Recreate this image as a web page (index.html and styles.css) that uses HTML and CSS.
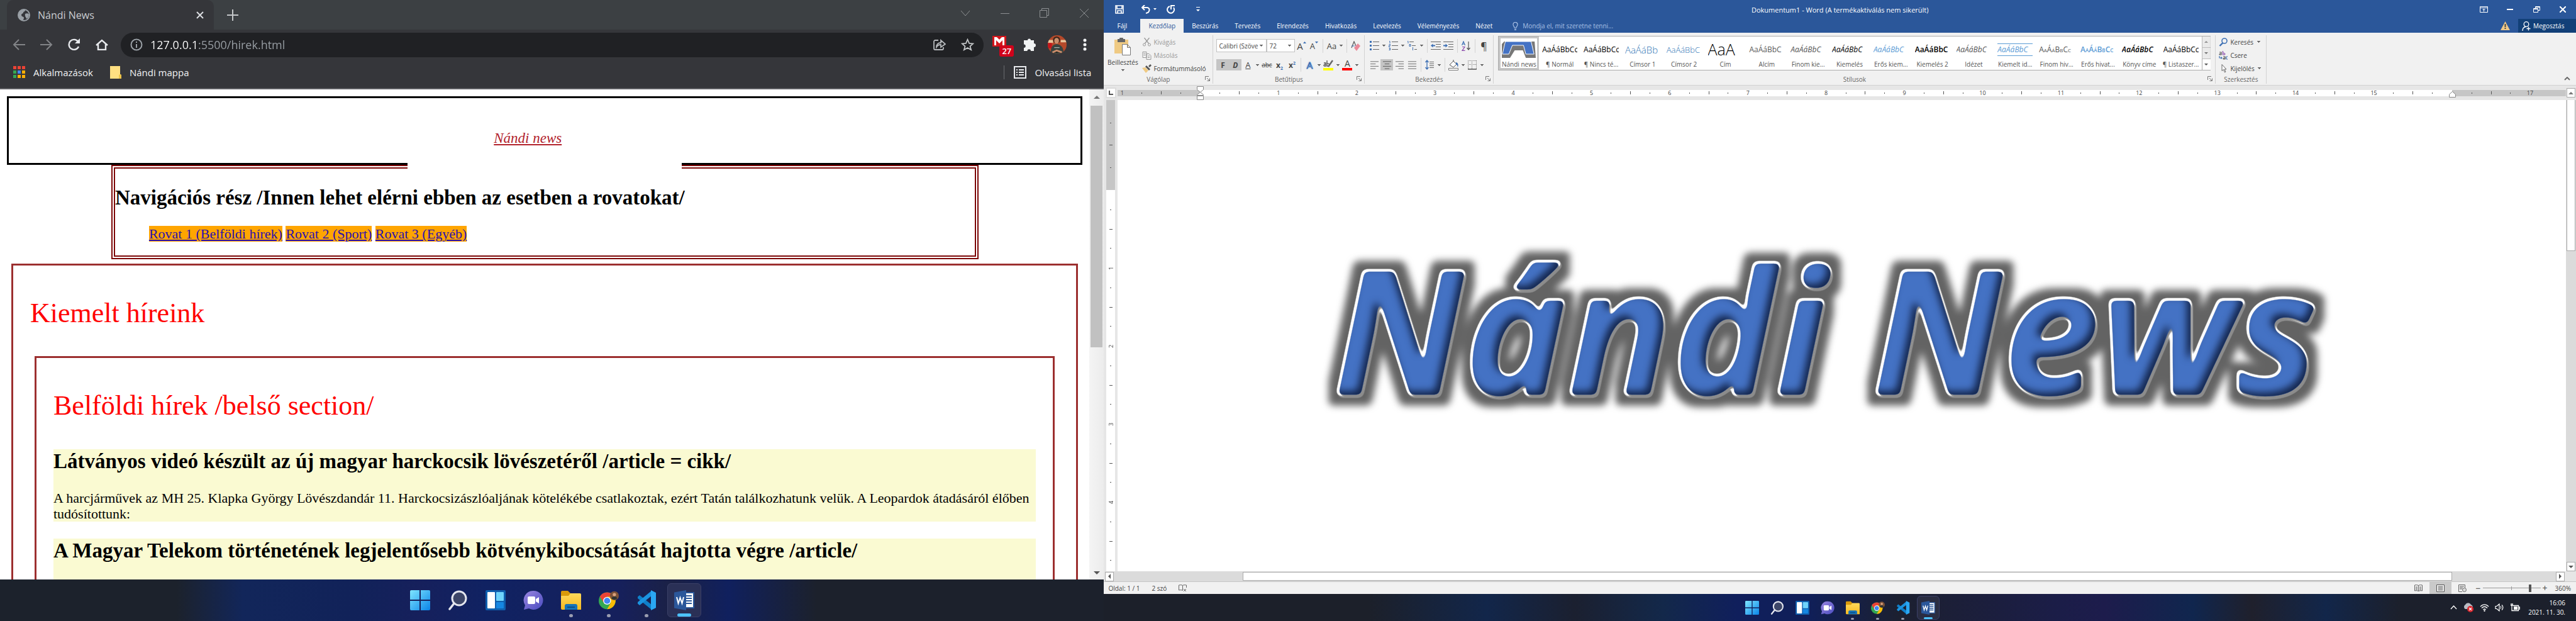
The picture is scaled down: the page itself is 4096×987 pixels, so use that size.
FILE: index.html
```html
<!DOCTYPE html>
<html lang="hu">
<head>
<meta charset="utf-8">
<title>Nándi News</title>
<link rel="stylesheet" href="styles.css">
</head>
<body>
<svg class="defs" width="0" height="0" aria-hidden="true">
  <defs>
    <linearGradient id="gWin" x1="0" y1="0" x2="1" y2="1"><stop offset="0" stop-color="#7fe6ff"/><stop offset="1" stop-color="#0a84e8"/></linearGradient>
    <linearGradient id="gChat" x1="0" y1="0" x2="1" y2="1"><stop offset="0" stop-color="#9a86e0"/><stop offset="1" stop-color="#4a4cc0"/></linearGradient>
    <linearGradient id="gFold" x1="0" y1="0" x2="0" y2="1"><stop offset="0" stop-color="#ffd95a"/><stop offset="1" stop-color="#f5b921"/></linearGradient>
    <filter id="wordart" x="-5%" y="-15%" width="110%" height="130%" color-interpolation-filters="sRGB">
      <feGaussianBlur in="SourceAlpha" stdDeviation="4" result="soft"/>
      <feComponentTransfer in="soft" result="body"><feFuncA type="linear" slope="9" intercept="-4.6"/></feComponentTransfer>
      <feComponentTransfer in="soft" result="rim"><feFuncA type="linear" slope="9" intercept="-2"/></feComponentTransfer>
      <feMorphology in="rim" operator="dilate" radius="14" result="wide"/>
      <feGaussianBlur in="wide" stdDeviation="6" result="wideSoft"/>
      <feFlood flood-color="#636363"/><feComposite in2="wideSoft" operator="in" result="glow"/>
      <feOffset in="rim" dx="1" dy="2" result="rimLow"/>
      <feFlood flood-color="#8c8c8c"/><feComposite in2="rimLow" operator="in" result="rimDark"/>
      <feOffset in="rim" dx="-1" dy="-1" result="rimHigh"/>
      <feFlood flood-color="#ffffff"/><feComposite in2="rimHigh" operator="in" result="rimWhite"/>
      <feOffset in="body" dx="2" dy="3" result="bodyLow"/>
      <feFlood flood-color="#8c8c8c"/><feComposite in2="bodyLow" operator="in" result="low"/>
      <feFlood flood-color="#4472c4"/><feComposite in2="body" operator="in" result="blue"/>
      <feFlood flood-color="#14264d"/><feComposite in2="body" operator="out" result="outside"/>
      <feGaussianBlur in="outside" stdDeviation="6" result="outSoft"/>
      <feOffset in="outSoft" dx="-6" dy="-6" result="outMoved"/>
      <feComposite in="outMoved" in2="body" operator="in" result="shade"/>
      <feMerge><feMergeNode in="glow"/><feMergeNode in="rimDark"/><feMergeNode in="rimWhite"/><feMergeNode in="low"/><feMergeNode in="blue"/><feMergeNode in="shade"/></feMerge>
    </filter>
    <symbol id="i-start" viewBox="0 0 32 32"><path fill="url(#gWin)" d="M0 2a2 2 0 0 1 2-2h13v15H0zM17 0h13a2 2 0 0 1 2 2v13H17zM0 17h15v15H2a2 2 0 0 1-2-2zM17 17h15v13a2 2 0 0 1-2 2H17z"/></symbol>
    <symbol id="i-search" viewBox="0 0 32 32"><circle cx="18" cy="13" r="11" fill="#3d4668" stroke="#e4e6ee" stroke-width="3"/><path d="M10 21 3 30" stroke="#e4e6ee" stroke-width="3.5" stroke-linecap="round"/></symbol>
    <symbol id="i-widgets" viewBox="0 0 32 32"><rect width="32" height="32" y="0" rx="2" fill="#0f5fae"/><rect x="3" y="3" width="12" height="26" rx="1" fill="#fff"/><rect x="17" y="3" width="12" height="14" rx="1" fill="#6fd4fb"/><rect x="17" y="19" width="12" height="10" rx="1" fill="#1587e2"/></symbol>
    <symbol id="i-chat" viewBox="0 0 32 32"><path fill="url(#gChat)" d="M16 1a15 15 0 1 1-7 28l-8 2 2-7A15 15 0 0 1 16 1z"/><rect x="7" y="10" width="12" height="12" rx="2" fill="#fff"/><path fill="#fff" d="m20 14 5-3v10l-5-3z"/></symbol>
    <symbol id="i-folder" viewBox="0 0 32 32"><path fill="#d99a0b" d="M0 3a2 2 0 0 1 2-2h9l4 4v6H0z"/><path fill="url(#gFold)" d="M0 9h12l3-4h15a2 2 0 0 1 2 2v24H2a2 2 0 0 1-2-2z"/><path fill="#1673b9" d="M6 31v-6a3 3 0 0 1 3-3h14a3 3 0 0 1 3 3v6z"/><path d="M10 27h12" stroke="#0b4f86" stroke-width="2"/></symbol>
    <symbol id="i-chrome" viewBox="0 0 36 34"><circle cx="15" cy="18" r="15" fill="#34a853"/><path fill="#ea4335" d="M2 10.500A15 15 0 0 1 28 10.500H15L9 21.500z"/><path fill="#fbbc05" d="M28 10.500A15 15 0 0 1 15 33l6.500-11.500L15 10.500z"/><circle cx="15" cy="18" r="7" fill="#fff"/><circle cx="15" cy="18" r="5.500" fill="#4285f4"/><circle cx="28" cy="9" r="8" fill="#7b5138"/><circle cx="28" cy="7" r="3" fill="#d9a07c"/><path fill="#2d3432" d="M23 14c1-5 9-5 10 0a8 8 0 0 1-10 0z"/></symbol>
    <symbol id="i-code" viewBox="0 0 32 32"><path fill="#0f7fc9" d="M2 10.500 5 8l19 15v8L2 13z"/><path fill="#1b93e0" d="M2 21.500 5 24 24 9V1L2 19z"/><path fill="#2aa7f3" d="m23 0 8 4v24l-8 4z"/></symbol>
    <symbol id="i-word" viewBox="0 0 32 32"><rect x="14" y="4" width="17" height="24" fill="#fff" stroke="#2b579a" stroke-width="2"/><path stroke="#2b579a" stroke-width="2" d="M19 9h9M19 13h9M19 17h9M19 21h9"/><path fill="#2b579a" d="M0 3.500 19 0v32L0 28.500z"/><path d="m4 11 2.500 10L9.500 12l3 9L15 11" stroke="#fff" stroke-width="2" fill="none"/></symbol>
    <symbol id="i-avatar" viewBox="0 0 32 32"><clipPath id="av"><circle cx="16" cy="16" r="16"/></clipPath><g clip-path="url(#av)"><rect width="32" height="32" fill="#b4492a"/><path fill="#e8c49a" d="M0 8h9v5H0zM22 8h10v4H22z"/><path fill="#c3161c" d="M0 13h7v9H0z"/><circle cx="15" cy="8" r="6" fill="#3a2419"/><ellipse cx="15" cy="9.500" rx="4" ry="5" fill="#c98d6b"/><path fill="#39433f" d="M5 32c0-11 2-16 10-17 8 1 12 6 12 17z"/><path stroke="#cfd5d2" d="M11 21h9"/><path stroke="#c98d6b" stroke-width="3" d="m8 29 7-3 9 3"/></g></symbol>
    <symbol id="i-launch" viewBox="0 0 8 8"><path fill="none" stroke="#777" d="M.5 6V.5H6M3 3l4 4M7.500 3.500v4h-4"/></symbol>
    <symbol id="i-al" viewBox="0 0 16 14"><path stroke="#666" d="M1 1.500h14M1 5.500h9M1 9.500h14M1 13.500h9"/></symbol>
    <symbol id="i-ac" viewBox="0 0 16 14"><path stroke="#555" d="M1 1.500h14M4 5.500h8M1 9.500h14M4 13.500h8"/></symbol>
    <symbol id="i-ar" viewBox="0 0 16 14"><path stroke="#666" d="M1 1.500h14M6 5.500h9M1 9.500h14M6 13.500h9"/></symbol>
    <symbol id="i-aj" viewBox="0 0 16 14"><path stroke="#666" d="M1 1.500h14M1 5.500h14M1 9.500h14M1 13.500h14"/></symbol>
  </defs>
</svg>
<div class="desktop">
  <section class="screen screen-left">
    <div class="browser">
      <header class="tabstrip">
        <div class="tab">
          <svg class="i20" viewBox="0 0 20 20"><circle cx="10" cy="10" r="9" fill="none" stroke="#9aa0a6" stroke-width="2"/><path fill="#9aa0a6" d="M3 5c3-4 8-4 9-3 0 3-3 2-3 4s-3 1-3 4 4 2 4 4-1 4-2 5C2 17 0 10 3 5zM12 8c2-1 5-1 6 1 0 4-2 6-4 7 0-3-3-3-2-8z"/></svg>
          <span class="tab-title">Nándi News</span>
          <button class="icon-btn" aria-label="Bezárás"><svg width="12" height="12" viewBox="0 0 12 12"><path stroke="#dadce0" stroke-width="2" d="m1 1 10 10M11 1 1 11"/></svg></button>
        </div>
        <button class="icon-btn new-tab" aria-label="Új lap"><svg width="18" height="18" viewBox="0 0 18 18"><path stroke="#c4c7c9" stroke-width="2" d="M9 0v18M0 9h18"/></svg></button>
        <div class="win-controls">
          <button class="icon-btn" aria-label="Lapok"><svg width="16" height="10" viewBox="0 0 16 10"><path fill="none" stroke="#8d9092" d="m1 1 7 8 7-8"/></svg></button>
          <button class="icon-btn" aria-label="Kis méret"><svg width="14" height="10" viewBox="0 0 14 10"><path stroke="#8d9092" d="M0 5.500h14"/></svg></button>
          <button class="icon-btn" aria-label="Előző méret"><svg width="15" height="15" viewBox="0 0 15 15"><path fill="none" stroke="#8d9092" d="M.5 3.500h11v11H.5zM3.500 3V.5h11v11H12"/></svg></button>
          <button class="icon-btn" aria-label="Ablak bezárása"><svg width="14" height="14" viewBox="0 0 14 14"><path stroke="#8d9092" d="m0 0 14 14M14 0 0 14"/></svg></button>
        </div>
      </header>
      <div class="toolbar">
        <button class="icon-btn nav-btn" aria-label="Vissza"><svg width="20" height="18" viewBox="0 0 20 18"><path fill="none" stroke="#828487" stroke-width="2" d="M20 9H2M10 1 2 9l8 8"/></svg></button>
        <button class="icon-btn nav-btn" aria-label="Előre"><svg width="20" height="18" viewBox="0 0 20 18"><path fill="none" stroke="#828487" stroke-width="2" d="M0 9h18M10 1l8 8-8 8"/></svg></button>
        <button class="icon-btn nav-btn" aria-label="Újratöltés"><svg width="20" height="20" viewBox="0 0 20 20"><path fill="none" stroke="#e8eaed" stroke-width="2.400" d="M17 13a8 8 0 1 1-1-8"/><path fill="#e8eaed" d="M19 0v8h-8z"/></svg></button>
        <button class="icon-btn nav-btn" aria-label="Kezdőlap"><svg width="20" height="18" viewBox="0 0 20 18"><path fill="none" stroke="#e8eaed" stroke-width="2.400" d="M1 10 10 2l9 8M4 8v9h12V8"/></svg></button>
        <div class="omnibox">
          <svg class="i20" viewBox="0 0 20 20"><circle cx="10" cy="10" r="8.500" fill="none" stroke="#9aa0a6" stroke-width="2"/><path stroke="#9aa0a6" stroke-width="2" d="M10 9v6M10 5v2"/></svg>
          <input class="url" aria-label="Cím" value="127.0.0.1:5500/hirek.html">
          <button class="icon-btn omni-btn" aria-label="Megosztás"><svg width="20" height="18" viewBox="0 0 20 18"><path fill="none" stroke="#b5b8bb" stroke-width="1.800" d="M8 2H3a2 2 0 0 0-2 2v11a2 2 0 0 0 2 2h11a2 2 0 0 0 2-2v-2M5 13c0-5 3-7 7-7V2l7 6-7 5v-4c-4 0-5 1-7 4z"/></svg></button>
          <button class="icon-btn omni-btn" aria-label="Könyvjelző"><svg width="21" height="20" viewBox="0 0 24 23"><path fill="none" stroke="#c4c7c9" stroke-width="2" d="m12 2 3 7 7 .6-5.400 4.800L18.500 21 12 17.200 5.500 21l1.900-6.600L2 9.600 9 9z"/></svg></button>
        </div>
        <button class="icon-btn ext-btn" aria-label="Gmail"><svg width="31" height="30" viewBox="0 0 31 30"><path fill="#d3161c" d="M0 1h22v17H0z"/><path fill="#fff" d="M3 3h16v13h-3V8l-5 5-5-5v8H3z"/><path fill="#d3161c" d="m6 2 5 5 5-5z"/></svg><span class="badge">27</span></button>
        <button class="icon-btn ext-btn" aria-label="Bővítmények"><svg width="21" height="20" viewBox="0 0 21 20"><path fill="#f1f3f4" d="M7 3a2.500 2.500 0 0 1 5 0h5v5a2.700 2.700 0 0 1 0 6v6h-5a2.700 2.700 0 0 0-5.500 0H1v-5a2.700 2.700 0 0 0 0-5.500V3z"/></svg></button>
        <button class="icon-btn ext-btn" aria-label="Profil"><svg width="30" height="30"><use href="#i-avatar"/></svg></button>
        <button class="icon-btn ext-btn" aria-label="Menü"><svg width="6" height="20" viewBox="0 0 6 20"><g fill="#f1f3f4"><circle cx="3" cy="3" r="2.500"/><circle cx="3" cy="10" r="2.500"/><circle cx="3" cy="17" r="2.500"/></g></svg></button>
      </div>
      <nav class="bookmarks">
        <a class="bookmark" href="#apps"><svg width="19" height="19" viewBox="0 0 19 19"><path fill="#ea4335" d="M0 0h5v5H0zM7 0h5v5H7zM14 0h5v5h-5z"/><path fill="#34a853" d="M0 7h5v5H0zM0 14h5v5H0z"/><path fill="#4285f4" d="M7 7h5v5H7z"/><path fill="#fbaf05" d="M14 7h5v5h-5zM7 14h5v5H7zM14 14h5v5h-5z"/></svg>Alkalmazások</a>
        <a class="bookmark" href="#mappa"><svg width="18" height="20" viewBox="0 0 18 20"><path fill="#ffe082" d="M0 0h16v13l2 1v6H0z"/><path fill="#edc348" d="M14 20v-6l2-1 2 1v6z"/></svg>Nándi mappa</a>
        <a class="bookmark reading" href="#lista"><svg width="20" height="20" viewBox="0 0 20 20"><rect x="1" y="1" width="18" height="18" fill="none" stroke="#e8eaed" stroke-width="2"/><path stroke="#e8eaed" stroke-width="2" d="M4 6h2M8 6h8M4 10h2M8 10h8M4 14h2M8 14h8"/></svg>Olvasási lista</a>
      </nav>
      <div class="viewport">
        <main class="page">
          <header class="page-header"><a class="logo" href="#top">Nándi news</a></header>
          <nav class="page-nav">
            <h2>Navigációs rész /Innen lehet elérni ebben az esetben a rovatokat/</h2>
            <ul><li><a href="#r1">Rovat 1 (Belföldi hírek)</a></li> <li><a href="#r2">Rovat 2 (Sport)</a></li> <li><a href="#r3">Rovat 3 (Egyéb)</a></li></ul>
          </nav>
          <section class="news">
            <h1>Kiemelt híreink</h1>
            <section class="news">
              <h1>Belföldi hírek /belső section/</h1>
              <article>
                <h2>Látványos videó készült az új magyar harckocsik lövészetéről /article = cikk/</h2>
                <p>A harcjárművek az MH 25. Klapka György Lövészdandár 11. Harckocsizászlóaljának kötelékébe csatlakoztak, ezért Tatán találkozhatunk velük. A Leopardok átadásáról élőben tudósítottunk:</p>
              </article>
              <article>
                <h2>A Magyar Telekom történetének legjelentősebb kötvénykibocsátását hajtotta végre /article/</h2>
                <p>&nbsp;</p>
              </article>
            </section>
          </section>
        </main>
        <div class="vscroll"><span class="tri up"></span><span class="thumb"></span><span class="tri down"></span></div>
      </div>
    </div>
    <footer class="taskbar taskbar-left">
      <div class="apps">
        <button aria-label="Start"><svg><use href="#i-start"/></svg></button>
        <button aria-label="Keresés"><svg><use href="#i-search"/></svg></button>
        <button aria-label="Widgetek"><svg><use href="#i-widgets"/></svg></button>
        <button aria-label="Csevegés"><svg><use href="#i-chat"/></svg></button>
        <button class="open" aria-label="Fájlkezelő"><svg><use href="#i-folder"/></svg></button>
        <button class="open" aria-label="Chrome"><svg><use href="#i-chrome"/></svg></button>
        <button class="open" aria-label="VS Code"><svg><use href="#i-code"/></svg></button>
        <button class="open current" aria-label="Word"><svg><use href="#i-word"/></svg></button>
      </div>
    </footer>
  </section>

  <section class="screen screen-right">
    <div class="word">
      <header class="w-title">
        <div class="quick">
          <button class="icon-btn" aria-label="Mentés"><svg width="14" height="14" viewBox="0 0 14 14"><path fill="none" stroke="#fff" stroke-width="1.600" d="M1 1h12v12H1zM3 1v5h8V1M4 13V9h6v4"/></svg></button>
          <button class="icon-btn" aria-label="Visszavonás"><svg width="24" height="14" viewBox="0 0 24 14"><path fill="none" stroke="#fff" stroke-width="2" d="M5 0 1 4l4 4M1 4h8c5 0 5 8-2 9"/><path fill="#fff" d="M19 5h5l-2.500 3z"/></svg></button>
          <button class="icon-btn" aria-label="Ismétlés"><svg width="14" height="14" viewBox="0 0 14 14"><path fill="none" stroke="#fff" stroke-width="2" d="M5 2a5.500 5.500 0 1 0 6 2M7 7V1h6"/></svg></button>
          <button class="icon-btn" aria-label="Testreszabás"><svg width="6" height="8" viewBox="0 0 6 8"><path fill="#fff" d="M0 0h6v1H0zM0 4h6L3 7z"/></svg></button>
        </div>
        <span class="doc-name">Dokumentum1 - Word (A termékaktiválás nem sikerült)</span>
        <div class="w-controls">
          <button class="icon-btn" aria-label="Menüszalag"><svg width="13" height="10" viewBox="0 0 13 10"><path fill="none" stroke="#fff" d="M.5.5h12v9H.5zM.5 2.500h12M6.500 8.500v-4M4.500 6l2-2 2 2"/></svg></button>
          <button class="icon-btn" aria-label="Kis méret"><svg width="10" height="4" viewBox="0 0 10 4"><path fill="#fff" d="M0 1h10v2H0z"/></svg></button>
          <button class="icon-btn" aria-label="Előző méret"><svg width="11" height="10" viewBox="0 0 11 10"><path fill="none" stroke="#fff" d="M.5 3.500h7v6h-7zM3.500 3V.5h7v6H8M.5 4.500h7M3 1.500h7"/></svg></button>
          <button class="icon-btn" aria-label="Bezárás"><svg width="10" height="10" viewBox="0 0 10 10"><path stroke="#fff" stroke-width="2" d="m0 0 10 10M10 0 0 10"/></svg></button>
        </div>
      </header>
      <nav class="w-tabs">
        <button class="file">Fájl</button><button class="sel">Kezdőlap</button><button>Beszúrás</button><button>Tervezés</button><button>Elrendezés</button><button>Hivatkozás</button><button>Levelezés</button><button>Véleményezés</button><button>Nézet</button>
        <button class="tell"><svg width="9" height="13" viewBox="0 0 9 13"><path fill="none" stroke="#a9c0e4" stroke-width="1.200" d="M3 9c0-2-2-2.500-2-5a3.500 3.500 0 0 1 7 0c0 2.500-2 3-2 5zM3 11h3M3 12.500h3"/></svg>Mondja el, mit szeretne tenni...</button>
        <svg class="warn" width="15" height="14" viewBox="0 0 15 14"><path fill="#f0c887" d="M7.500 0 15 14H0z"/><path stroke="#444" stroke-width="2" d="M7.500 4v5M7.500 10v2"/></svg>
        <button class="share"><svg width="14" height="15" viewBox="0 0 14 15"><circle cx="7" cy="4.500" r="3.800" fill="none" stroke="#fff" stroke-width="1.300"/><path fill="none" stroke="#fff" stroke-width="1.300" d="M1 15c0-4 2-6 5-6.500M10.500 8.500v6M7.500 11.500h6"/></svg>Megosztás</button>
      </nav>
      <div class="ribbon">
        <section class="group g-clip">
          <div class="clip">
            <button class="paste"><svg width="26" height="28" viewBox="0 0 26 28"><path fill="#efca83" d="M0 3h22v22H0z"/><path fill="#666" d="M5 2h3a3 3 0 0 1 6 0h3v5H5z"/><path fill="#fff" stroke="#777" d="M12.500 10.500h8l5 5v12h-13zM20.500 10.500v5h5"/></svg>Beillesztés<i class="dd"></i></button>
            <div class="rows">
              <button class="off"><svg width="14" height="14" viewBox="0 0 14 14"><path fill="none" stroke="#999" stroke-width="1.300" d="m3 0 7 9M11 0 4 9"/><circle cx="3" cy="11" r="2" fill="none" stroke="#999"/><circle cx="11" cy="11" r="2" fill="none" stroke="#999"/></svg>Kivágás</button>
              <button class="off"><svg width="14" height="14" viewBox="0 0 14 14"><path fill="#f1f1f1" stroke="#999" d="M.5 1.500h6v9h-6zM6.500 4.500h4l3 3v6h-7zM2 4h3M2 6.500h3M8.500 8h3M8.500 10.500h3"/></svg>Másolás</button>
              <button><svg width="15" height="14" viewBox="0 0 15 14"><path fill="#efca83" d="m0 6 5-1 5 5-4 4z"/><path fill="#555" d="m5 4 2-2 6 6-2 2zM10 3l3-3 2 2-3 3z"/></svg>Formátummásoló</button>
            </div>
          </div>
          <footer>Vágólap<svg><use href="#i-launch"/></svg></footer>
        </section>
        <section class="group g-font">
          <div class="row r1">
            <select class="combo font" aria-label="Betűtípus"><option>Calibri (Szöve</option></select><select class="combo size" aria-label="Betűméret"><option>72</option></select>
            <button class="t"><span class="big">A</span><svg width="5" height="14" viewBox="0 0 5 14"><path fill="#3c6fb4" d="M0 3h5L2.500 0z"/></svg></button>
            <button class="t"><span class="mid">A</span><svg width="5" height="14" viewBox="0 0 5 14"><path fill="#3c6fb4" d="M0 0h5L2.500 3z"/></svg></button>
            <i class="s"></i><button class="t mid">Aa</button><i class="dd"></i><i class="s"></i>
            <button class="t"><svg width="15" height="16" viewBox="0 0 15 16"><path fill="none" stroke="#555" stroke-width="1.200" d="m1 11 4-10 3 7"/><path fill="#ea8a9b" d="m5 11 6-7 4 4-6 8z"/><path stroke="#3c6fb4" d="M1 8h5"/></svg></button>
          </div>
          <div class="row r2">
            <button class="t on"><b>F</b></button><button class="t on"><b><em>D</em></b></button><button class="t"><u class="mid">A</u></button><i class="dd"></i>
            <button class="t"><s>abc</s></button><button class="t"><b>x<sub>2</sub></b></button><button class="t"><b>x<sup>2</sup></b></button><i class="s"></i>
            <button class="t glowA">A</button><i class="dd"></i>
            <button class="t"><svg width="16" height="17" viewBox="0 0 16 17"><path fill="#ff0" d="M0 13h16v4H0z"/><path fill="none" stroke="#555" stroke-width="1.300" d="M1 5h3v5H2c-2 0-1-3 2-3M6 1v9h2c3 0 2-5-2-4"/><path stroke="#666" stroke-width="2.400" d="m15 1-7 10"/></svg></button><i class="dd"></i>
            <button class="t fontcolor">A</button><i class="dd"></i>
          </div>
          <footer>Betűtípus<svg><use href="#i-launch"/></svg></footer>
        </section>
        <section class="group g-para">
          <div class="row r1">
            <button class="t"><svg width="15" height="15" viewBox="0 0 15 15"><path fill="#3c6fb4" d="M0 0h3v3H0zM0 6h3v3H0zM0 12h3v3H0z"/><path stroke="#666" d="M5 1.500h10M5 7.500h10M5 13.500h10"/></svg></button><i class="dd"></i>
            <button class="t"><svg width="15" height="15" viewBox="0 0 15 15"><path fill="none" stroke="#3c6fb4" d="M1 .5h1V4M.5 5.500h2v2h-2v2h2M.5 11.500h2v3h-2M1 13h1"/><path stroke="#666" d="M5 1.500h10M5 7.500h10M5 13.500h10"/></svg></button><i class="dd"></i>
            <button class="t"><svg width="16" height="15" viewBox="0 0 16 15"><path fill="none" stroke="#3c6fb4" d="M1 .5h1V4M4 5.500h2v3H4zM9.500 10v5"/><path stroke="#666" d="M4 1.500h7M8 7.500h6M12 13.500h4"/></svg></button><i class="dd"></i><i class="s"></i>
            <button class="t"><svg width="16" height="13" viewBox="0 0 16 13"><path stroke="#666" d="M0 .5h16M8 4.500h8M8 8.500h8M0 12.500h16"/><path fill="#3c6fb4" d="m0 6.500 3.500-3v2H7v2H3.500v2z"/></svg></button>
            <button class="t"><svg width="16" height="13" viewBox="0 0 16 13"><path stroke="#666" d="M0 .5h16M8 4.500h8M8 8.500h8M0 12.500h16"/><path fill="#3c6fb4" d="m7 6.500-3.500-3v2H0v2h3.500v2z"/></svg></button><i class="s"></i>
            <button class="t"><svg width="14" height="16" viewBox="0 0 14 16"><path fill="none" stroke="#3c6fb4" stroke-width="1.200" d="m.5 7 2.500-6 2.500 6M1.500 5h3"/><path fill="none" stroke="#8a4bab" stroke-width="1.200" d="M1 9.500h4L1 15.400h4.500"/><path fill="none" stroke="#555" stroke-width="1.200" d="M11 1v13M8.500 11l2.500 3 2.500-3"/></svg></button><i class="s"></i>
            <button class="t pil">¶</button>
          </div>
          <div class="row r2">
            <button class="t"><svg width="15" height="14"><use href="#i-al"/></svg></button><button class="t on"><svg width="15" height="14"><use href="#i-ac"/></svg></button><button class="t"><svg width="15" height="14"><use href="#i-ar"/></svg></button><button class="t"><svg width="15" height="14"><use href="#i-aj"/></svg></button><i class="s"></i>
            <button class="t"><svg width="14" height="16" viewBox="0 0 14 16"><path fill="none" stroke="#3c6fb4" stroke-width="1.300" d="M3 1v14M.5 4 3 1l2.500 3M.5 12 3 15l2.500-3"/><path stroke="#666" d="M7 3.500h7M7 6.500h7M7 9.500h7M7 12.500h7"/></svg></button><i class="dd"></i><i class="s"></i>
            <button class="t"><svg width="16" height="17" viewBox="0 0 16 17"><path fill="#fff" stroke="#777" d="M.5 13.500h15v3H.5z"/><path fill="#fff" stroke="#555" d="M2 8 8 2l5 5-5 5zM8 2V0"/><path fill="#3c6fb4" d="M12 4c4 1 4 4 3 8-1-3-1-4-3-5z"/></svg></button><i class="dd"></i>
            <button class="t"><svg width="14" height="15" viewBox="0 0 14 15"><path fill="none" stroke="#777" stroke-dasharray="1 1" d="M.5 0v14M6.500 0v14M13.500 0v14M0 .5h14M0 6.500h14"/><path stroke="#444" stroke-width="1.400" d="M0 14h14"/></svg></button><i class="dd"></i>
          </div>
          <footer>Bekezdés<svg><use href="#i-launch"/></svg></footer>
        </section>
        <section class="group g-styles">
          <div class="gallery">
            <button class="style chosen"><svg class="thumbart" viewBox="0 0 58 26" preserveAspectRatio="none"><path fill="#777" d="M0 4 4 0h52l2 26H41L36 14H22l-8 12H0z"/><path fill="#4472c4" stroke="#fff" d="M6 0h44l5 20H41L37 6H18l-6 14H1z"/></svg><span>Nándi news</span></button>
            <button class="style"><b class="k">AaÁáBbCc</b><span>¶ Normál</span></button>
            <button class="style"><b class="k">AaÁáBbCc</b><span>¶ Nincs té...</span></button>
            <button class="style"><b class="h1s">AaÁáBb</b><span>Címsor 1</span></button>
            <button class="style"><b class="h2s">AaÁáBbC</b><span>Címsor 2</span></button>
            <button class="style"><b class="ttl">AaA</b><span>Cím</span></button>
            <button class="style"><b class="sub">AaÁáBbC</b><span>Alcím</span></button>
            <button class="style"><b class="it g">AaÁáBbC</b><span>Finom kie...</span></button>
            <button class="style"><b class="it k">AaÁáBbC</b><span>Kiemelés</span></button>
            <button class="style"><b class="it bl">AaÁáBbC</b><span>Erős kiem...</span></button>
            <button class="style"><b class="k bd">AaÁáBbC</b><span>Kiemelés 2</span></button>
            <button class="style"><b class="it g">AaÁáBbC</b><span>Idézet</span></button>
            <button class="style"><b class="it bl lined">AaÁáBbC</b><span>Kiemelt id...</span></button>
            <button class="style"><b class="g sc">AaÁáBbCc</b><span>Finom hiv...</span></button>
            <button class="style"><b class="bl sc bd">AaÁáBbCc</b><span>Erős hivat...</span></button>
            <button class="style"><b class="it k bd">AaÁáBbC</b><span>Könyv címe</span></button>
            <button class="style"><b class="k">AaÁáBbCc</b><span>¶ Listaszer...</span></button>
            <div class="gal-nav"><button aria-label="Fel"><span class="tri up"></span></button><button aria-label="Le"><span class="tri down"></span></button><button class="more" aria-label="Továbbiak"><span class="tri down"></span></button></div>
          </div>
          <footer>Stílusok<svg><use href="#i-launch"/></svg></footer>
        </section>
        <section class="group g-edit">
          <div class="rows">
            <button><svg width="14" height="14" viewBox="0 0 14 14"><circle cx="8.500" cy="5" r="4" fill="none" stroke="#3c6fb4" stroke-width="1.600"/><path stroke="#3c6fb4" stroke-width="2.400" d="M6 8 1 13"/></svg>Keresés<i class="dd"></i></button>
            <button><svg width="15" height="14" viewBox="0 0 15 14"><path fill="none" stroke="#555" stroke-width="1.200" d="M1 2h3v4H2C0 6 1 4 4 4M7 9h3v4H8c-2 0-1-2 2-2"/><path fill="none" stroke="#8a4bab" stroke-width="1.200" d="M6.500 0v6h2c2 0 2-3-2-3"/><path fill="none" stroke="#3c6fb4" stroke-width="1.200" d="M14 9c-3-1-3 5 0 4M1 8v3h4M3.500 9.500 5 11l-1.500 1.500"/></svg>Csere</button>
            <button><svg width="14" height="14" viewBox="0 0 14 14"><path fill="#fff" stroke="#666" d="M4.500.5v10l2.500-2 2 4.500 1.500-1L8.500 8h3z"/></svg>Kijelölés<i class="dd"></i></button>
          </div>
          <footer>Szerkesztés</footer>
        </section>
        <button class="icon-btn collapse" aria-label="Összecsukás"><svg width="10" height="6" viewBox="0 0 10 6"><path fill="none" stroke="#666" stroke-width="1.800" d="m1 5 4-4 4 4"/></svg></button>
      </div>
      <div class="hruler">
        <span class="corner"><svg width="7" height="7" viewBox="0 0 7 7"><path fill="none" stroke="#555" stroke-width="2" d="M1 0v6h6"/></svg></span>
        <div class="lead"><b>1</b><i class="cell"></i><svg class="mark" width="13" height="22" viewBox="0 0 13 22"><path fill="#fff" stroke="#888" d="M1.500.5h10v5l-5 4 5 4v1h-10v-1l5-4-5-4zM1.500 15.500h10v6h-10z"/></svg></div>
        <ol class="cells"><li><b>1</b></li><li><b>2</b></li><li><b>3</b></li><li><b>4</b></li><li><b>5</b></li><li><b>6</b></li><li><b>7</b></li><li><b>8</b></li><li><b>9</b></li><li><b>10</b></li><li><b>11</b></li><li><b>12</b></li><li><b>13</b></li><li><b>14</b></li><li><b>15</b></li><li></li></ol>
        <div class="trail"><svg class="mark" width="11" height="10" viewBox="0 0 11 10"><path fill="#fff" stroke="#888" d="M.5 9.500V5l5-4.500 5 4.500v4.500z"/></svg><i class="cell"></i><b>17</b></div>
        <button class="sb" aria-label="Fel"><span class="tri up"></span></button>
      </div>
      <div class="w-body">
        <ol class="vruler"><li class="top"></li><li><b>1</b></li><li><b>2</b></li><li><b>3</b></li><li><b>4</b></li><li></li></ol>
        <div class="paper"><p class="wordart">Nándi News</p></div>
        <div class="w-vscroll"><span class="vthumb"></span><button class="sb" aria-label="Le"><span class="tri down"></span></button></div>
      </div>
      <div class="w-hscroll"><button class="sb" aria-label="Balra"><span class="tri left"></span></button><span class="hthumb"></span><button class="sb" aria-label="Jobbra"><span class="tri right"></span></button></div>
      <footer class="status">
        <span>Oldal: 1 / 1</span><span>2 szó</span><svg width="13" height="11" viewBox="0 0 13 11"><path fill="none" stroke="#666" d="M6.500 1.500C5 .5 3 .5.500 1v8c2.500-.5 4.500-.5 6 .5V1.500c1.500-1 3.500-1 6-.5v4M8 7l4 4M12 7l-4 4"/></svg>
        <div class="views">
          <button aria-label="Olvasás"><svg width="13" height="12" viewBox="0 0 13 12"><path fill="none" stroke="#666" d="M6.500 1.500c-2-1-4-1-6-.5v9c2-.5 4-.5 6 .5zc2-1 4-1 6-.5v9c-2-.5-4-.5-6 .5M2 4h3M2 6h3M2 8h3M8 4h3M8 6h3M8 8h3"/></svg></button>
          <button class="on" aria-label="Nyomtatási kép"><svg width="13" height="12" viewBox="0 0 13 12"><path fill="#fff" stroke="#555" d="M.5.5h12v11H.5zM2.500 3h8M2.500 5h8M2.500 7h8M2.500 9h8"/></svg></button>
          <button aria-label="Webes elrendezés"><svg width="13" height="12" viewBox="0 0 13 12"><path fill="none" stroke="#666" d="M6 11.500H.5V.5h10V5M2 3h7M2 5h5M2 7h4"/><circle cx="9.500" cy="8.500" r="3" fill="#ddd" stroke="#666"/></svg></button>
        </div>
        <div class="zoom"><span>−</span><input type="range" aria-label="Nagyítás" min="0" max="100" value="83"><span>+</span></div>
        <span class="pct">360%</span>
      </footer>
    </div>
    <footer class="taskbar taskbar-right">
      <div class="apps">
        <button aria-label="Start"><svg><use href="#i-start"/></svg></button>
        <button aria-label="Keresés"><svg><use href="#i-search"/></svg></button>
        <button aria-label="Widgetek"><svg><use href="#i-widgets"/></svg></button>
        <button aria-label="Csevegés"><svg><use href="#i-chat"/></svg></button>
        <button class="open" aria-label="Fájlkezelő"><svg><use href="#i-folder"/></svg></button>
        <button class="open" aria-label="Chrome"><svg><use href="#i-chrome"/></svg></button>
        <button class="open" aria-label="VS Code"><svg><use href="#i-code"/></svg></button>
        <button class="open current" aria-label="Word"><svg><use href="#i-word"/></svg></button>
      </div>
      <div class="tray">
        <svg width="11" height="7" viewBox="0 0 11 7"><path fill="none" stroke="#fff" stroke-width="1.300" d="m1 6 4.500-5L10 6"/></svg>
        <svg width="18" height="15" viewBox="0 0 18 15"><path fill="#b8bcc4" d="M4 10a4 4 0 0 1 0-7 5 5 0 0 1 9 0c3 1 4 5 1 7z"/><circle cx="12" cy="10" r="5" fill="#d9262d"/><path stroke="#fff" stroke-width="1.200" d="m10 8 4 4M14 8l-4 4"/></svg>
        <svg width="15" height="12" viewBox="0 0 15 12"><path fill="none" stroke="#fff" stroke-width="1.400" d="M1 4c4-4 9-4 13 0M3 6.500c3-3 6-3 9 0M5.500 9c1.300-1.200 2.700-1.200 4 0"/><circle cx="7.500" cy="10.800" r="1.200" fill="#fff"/></svg>
        <svg width="15" height="13" viewBox="0 0 15 13"><path fill="none" stroke="#fff" stroke-width="1.200" d="M1 4.500h2L7 1v11L3 8.500H1zM9 4.500c1 1 1 3 0 4M11 2.500c2.500 2 2.500 6 0 8"/></svg>
        <svg width="16" height="13" viewBox="0 0 16 13"><path fill="none" stroke="#fff" stroke-width="1.300" d="M5 3.500h8.500v8H3V8M14 6h1.500v3H14M1 3h4M2 0v3M4 0v3M3 3v5"/><path fill="#fff" d="M6 5h6v5H6z"/></svg>
        <time>16:06<br>2021. 11. 30.</time>
      </div>
    </footer>
  </section>
</div>
</body>
</html>
```
FILE: styles.css
```css
* { box-sizing: border-box; }
html, body { height: 100%; margin: 0; }
body { overflow: hidden; font-family: "Open Sans", "Noto Sans", sans-serif; }
button { border: 0; margin: 0; padding: 0; background: none; font: inherit; color: inherit; }
svg { display: block; flex: none; }
.defs { position: absolute; }
.i20 { width: 20px; height: 20px; }
.desktop { display: flex; height: 100vh; }
.screen { display: flex; flex-direction: column; height: 100%; min-width: 0; overflow: hidden; }
.screen-left { flex: 3 1 0; }
.screen-right { flex: 4 1 0; }
.icon-btn { display: flex; align-items: center; justify-content: center; }

/* browser */
.browser { flex: 1; min-height: 0; display: flex; flex-direction: column; background: #35363a; color: #e8eaed; }
.tabstrip { display: flex; height: 47px; background: #3c4043; align-items: stretch; }
.tab { display: flex; align-items: center; width: 329px; margin-left: 11px; padding: 0 16px 0 17px; background: #35363a; border-radius: 10px 10px 0 0; font-size: 16px; }
.tab-title { margin-left: 12px; flex: 1; color: #c9ccd0; }
.new-tab { width: 60px; }
.win-controls { display: flex; margin-left: auto; padding-bottom: 6px; }
.win-controls .icon-btn { width: 63px; }
.toolbar { display: flex; align-items: center; height: 48px; padding: 0 8px; }
.nav-btn { width: 44px; height: 40px; }
.omnibox { flex: 1; display: flex; align-items: center; height: 39px; margin: 0 7px 0 8px; padding: 0 4px 0 15px; background: #202124; border-radius: 20px; }
.url { flex: 1; min-width: 0; margin-left: 12px; padding: 0; border: 0; outline: 0; font: 18px "Open Sans", sans-serif; color: transparent; background: linear-gradient(90deg, #fff 76px, #9aa0a6 76px); -webkit-background-clip: text; background-clip: text; }
.omni-btn { width: 44px; height: 36px; }
.ext-btn { position: relative; width: 44px; height: 40px; }
.badge { position: absolute; left: 18px; top: 21px; padding: 0 4px; background: #d0021b; border-radius: 3px; color: #fff; font-size: 13px; font-weight: 600; line-height: 18px; }
.bookmarks { display: flex; align-items: center; height: 47px; padding: 0 20px 6px 21px; border-bottom: 2px solid #5f6064; }
.bookmark { display: flex; align-items: center; gap: 13px; margin-right: 27px; color: #f1f3f4; font-size: 15px; text-decoration: none; }
.reading { margin: 0 0 0 auto; padding-left: 15px; height: 22px; border-left: 1px solid #6a6c70; }
.viewport { flex: 1; min-height: 0; display: flex; background: #fff; color: #000; }
.page { flex: 1; min-width: 0; overflow: hidden; padding: 11px; font-family: "Liberation Serif", "Times New Roman", serif; font-size: 22px; line-height: 25px; }
.page h1 { margin: 0; font-size: 44px; line-height: 50px; font-weight: 400; color: #f00; }
.page h2 { margin: 0; font-size: 33px; line-height: 38px; }
.page p { margin: 27px 0 0; }
.page-header { display: flex; justify-content: center; height: 109px; border: 3px solid #000; }
.logo { position: relative; z-index: 1; flex: none; width: 436px; height: 114px; padding: 51px 0 0 137px; background: #fff; color: #b2222c; font-size: 23px; font-style: italic; }
.page-nav { width: 80.6%; margin: 0 auto; padding-top: 27px; border: 6px double #7d0808; }
.page-nav ul { list-style: none; margin: 26px 0 22px; padding: 0 0 0 54px; }
.page-nav li { display: inline; }
.page-nav a { background: orange; color: #2a0fae; }
.news { margin: 7px 7px 0; padding: 51px 27px 60px; border: 3px solid #9c2f2f; }
.news .news { margin-top: 43px; }
article { margin-top: 27px; background: #fafad2; }
.news h1 + article { margin-top: 44px; }
.vscroll { flex: none; width: 23px; display: flex; flex-direction: column; align-items: center; padding: 10px 0 8px; background: linear-gradient(90deg, #f4f4f4, #ececec); }
.thumb { width: 19px; height: 384px; margin: 11px 0 auto; background: #c1c1c1; }
.tri { display: block; border: 5px solid transparent; }
.tri.up { border-top: 0; border-bottom-color: #777; }
.tri.down { border-bottom: 0; border-top-color: #555; }
.tri.left { border-left: 0; border-right-color: #555; }
.tri.right { border-right: 0; border-left-color: #555; }

/* taskbars */
.taskbar { position: relative; flex: none; display: flex; align-items: center; justify-content: center; color: #fff; }
.taskbar-left { height: 66px; background: linear-gradient(90deg, #1c222c 0 16%, #12265a 22%, #112259 32%, #16205c 38%, #102262 44%, #16205c 56%, #1b2145 61%, #10205e 66%, #1c212c 74%); }
.taskbar-right { height: 43px; background: linear-gradient(90deg, #1c202a 0 18%, #12264a 26%, #1b2030 32%, #13284a 38%, #101f5c 43%, #101f58 48%, #1c2030 54%, #1b1d48 65%, #1d1c4c 68%, #10264e 74%, #1f202c 78%, #12264a 83%, #1c202c 88%); }
.apps { display: flex; gap: 6px; }
.apps button { position: relative; display: flex; align-items: center; justify-content: center; width: 54px; height: 54px; border-radius: 6px; }
.apps svg { width: 32px; height: 32px; }
.apps .open::after { content: ""; position: absolute; bottom: 0; left: 50%; width: 6px; height: 5px; margin-left: -3px; border-radius: 3px; background: #9a9db0; }
.apps .current { background: #2a3056; border: 1px solid #3b4067; }
.apps .current::after { width: 22px; margin-left: -11px; background: #4cc2ff; }
.taskbar-right .apps { gap: 4px; }
.taskbar-right .apps button { width: 36px; height: 38px; }
.taskbar-right .apps svg { width: 22px; height: 22px; }
.taskbar-right .apps .open::after { height: 3px; width: 5px; }
.taskbar-right .apps .current { background: #2a2d42; }
.taskbar-right .apps .current::after { width: 14px; margin-left: -7px; }
.tray { position: absolute; right: 17px; top: 0; bottom: 0; display: flex; align-items: center; gap: 9px; }
.tray time { margin-left: 4px; font-size: 10px; line-height: 15px; text-align: right; }

/* word */
.word { flex: 1; min-height: 0; display: flex; flex-direction: column; background: #e6e6e6; font-size: 10px; color: #444; }
.w-title { display: grid; grid-template-columns: 1fr auto 1fr; align-items: center; height: 30px; background: #2b579a; color: #fff; }
.doc-name { font-size: 11px; }
.quick { display: flex; gap: 16px; padding-left: 18px; align-items: center; }
.quick .icon-btn:nth-child(2) { margin-left: 12px; }
.quick .icon-btn:nth-child(4) { margin-left: 17px; }
.w-controls { display: flex; justify-content: flex-end; }
.w-controls .icon-btn { width: 42px; height: 28px; }
.w-tabs { display: flex; align-items: stretch; height: 22px; background: #2b579a; color: #fff; }
.w-tabs button { padding: 0 13px; }
.w-tabs .file { width: 58px; padding: 0; }
.w-tabs .sel { background: #f1f1f1; color: #2b579a; }
.w-tabs .tell { display: flex; align-items: center; gap: 7px; margin-left: 6px; color: #a9c0e4; }
.warn { margin: 4px 13px 0 auto; }
.w-tabs .share { display: flex; align-items: center; gap: 4px; width: 92px; padding: 0 0 0 6px; background: #124078; }
.ribbon { display: flex; height: 84px; padding: 4px 0 2px; background: #f1f1f1; border-bottom: 1px solid #d2d2d2; }
.group { position: relative; display: flex; flex-direction: column; border-right: 1px solid #d2d2d2; padding: 6px 5px 0; }
.group footer { display: flex; justify-content: center; margin-top: auto; line-height: 14px; color: #666; }
.group footer svg { position: absolute; right: 4px; bottom: 4px; width: 8px; height: 8px; }
.g-clip { width: 174px; padding-top: 0; }
.g-font { width: 241px; }
.g-para { width: 205px; }
.g-styles { flex: none; width: 1148px; padding: 1px 7px 0; }
.g-edit { width: 81px; padding-top: 0; }
.dd { display: block; flex: none; width: 10px; height: 3px; background: linear-gradient(#666, #666) 50% 0 / 5px 1px no-repeat, linear-gradient(#666, #666) 50% 1px / 3px 1px no-repeat, linear-gradient(#666, #666) 50% 2px / 1px 1px no-repeat; }
.clip { display: flex; }
.paste { display: flex; flex-direction: column; align-items: center; width: 50px; padding-top: 4px; line-height: 22px; }
.rows { display: flex; flex-direction: column; padding-top: 0; }
.rows button { display: flex; align-items: center; gap: 3px; height: 21px; }
.rows svg { width: 15px; }
.clip .rows { padding-left: 6px; }
.off { color: #999; }
.row { display: flex; align-items: center; }
.r1 { height: 21px; }
.r2 { height: 18px; margin-top: 11px; font-size: 12px; }
.combo { appearance: none; flex: none; height: 21px; padding: 0 0 0 3px; border: 1px solid #c3c3c3; border-radius: 0; background: linear-gradient(#666, #666) right 5px top 8px / 5px 1px no-repeat, linear-gradient(#666, #666) right 6px top 9px / 3px 1px no-repeat, linear-gradient(#666, #666) right 7px top 10px / 1px 1px no-repeat, #fff; color: #444; font: 10px "Open Sans", sans-serif; }
.font { width: 80px; }
.size { width: 45px; }
.t { display: flex; align-items: center; justify-content: center; flex: none; width: 20px; height: 18px; }
.t.on { background: #c5c5c5; }
.t sub, .t sup { font-size: 7px; line-height: 0; color: #3c6fb4; }
.t s { font-size: 10px; }
.big { font-size: 15px; }
.mid { font-size: 13px; }
.s { flex: none; width: 8px; height: 22px; background: linear-gradient(#d4d4d4, #d4d4d4) 50% 0 / 1px 100% no-repeat; }
.glowA { font-size: 15px; color: #fff; -webkit-text-stroke: 1px #3c6fb4; text-shadow: 0 0 3px #7fb2ec; }
.fontcolor { font-size: 14px; line-height: 14px; border-bottom: 4px solid #f00; width: 16px; margin: 0 2px; }
.pil { font-size: 16px; }
.gallery { display: flex; height: 55px; border: 1px solid #acacac; background: #fff; }
.style { flex: 1 1 0; min-width: 0; display: flex; flex-direction: column; align-items: center; padding: 8px 5px 0; overflow: hidden; white-space: nowrap; }
.style b { display: block; width: 100%; height: 26px; overflow: hidden; font-weight: 400; font-size: 12px; line-height: 26px; text-align: left; }
.style span { line-height: 16px; margin-top: 2px; color: #555; }
.chosen { padding: 5px 1px 0; border: 3px solid #c5c5c5; }
.thumbart { width: 54px; height: 26px; }
.style .k { color: #000; }
.style .g { color: #555; }
.style .bl { color: #5b9bd5; }
.style .it { font-style: italic; }
.style .bd { font-weight: 600; }
.style .sc { font-variant: small-caps; }
.style .h1s { font-size: 15px; color: #2e74b5; font-weight: 300; }
.style .h2s { font-size: 13px; color: #2e74b5; font-weight: 300; }
.style .ttl { font-size: 25px; line-height: 24px; color: #000; font-weight: 300; }
.style .sub { color: #5a5a5a; }
.style .lined { height: 20px; margin: 3px 0; line-height: 18px; border: solid #5b9bd5; border-width: 1px 0; }
.gal-nav { display: flex; flex-direction: column; width: 14px; }
.gal-nav button { flex: 1; display: flex; align-items: center; justify-content: center; border: solid #acacac; border-width: 0 0 1px 1px; background: #e6e6e6; opacity: .8; }
.gal-nav .more { background: #fff; opacity: 1; border-bottom: 0; }
.gal-nav .tri { border-left-width: 3px; border-right-width: 3px; border-top-width: 3px; }
.gal-nav .up { border-top-width: 0; border-bottom-width: 3px; }
.collapse { margin: auto 8px 2px auto; width: 12px; height: 12px; }
.hruler { display: flex; align-items: center; height: 23px; padding-left: 3px; }
.corner { display: flex; align-items: center; justify-content: center; width: 17px; height: 17px; margin-right: 2px; background: #fff; border: 2px solid #dcdcdc; }
.lead, .trail { position: relative; display: flex; align-items: center; height: 10px; background: #c6c6c6; }
.lead { width: 131px; }
.trail { width: 181px; }
.hruler b { display: flex; justify-content: center; width: 0; font-weight: 400; font-size: 9px; line-height: 10px; }
.lead b { margin-left: 7px; }
.cell, .cells li { background: linear-gradient(#555, #555) 25% 50% / 1px 2px no-repeat, linear-gradient(#555, #555) 50% 50% / 1px 5px no-repeat, linear-gradient(#555, #555) 75% 50% / 1px 2px no-repeat; }
.cell { width: 124px; height: 10px; }
.cells { flex: 1; display: flex; height: 10px; margin: 0; padding: 0; list-style: none; background: #fff; }
.cells li { flex: 1; display: flex; justify-content: flex-end; }
.lead .mark { position: absolute; right: -7px; top: -6px; }
.trail .mark { position: absolute; left: -5px; top: 2px; z-index: 1; }
.sb { display: flex; align-items: center; justify-content: center; flex: none; width: 14px; height: 15px; background: #fff; border: 1px solid #ababab; }
.sb .tri { border-width: 4px; }
.sb .up { border-top-width: 0; }
.sb .down { border-bottom-width: 0; }
.sb .left { border-left-width: 0; }
.sb .right { border-right-width: 0; }
.hruler .sb { margin: 0 1px; }
.w-body { flex: 1; min-height: 0; display: flex; }
.vruler { flex: none; width: 14px; margin: 0 4px; padding: 0; list-style: none; overflow: hidden; background: #fff; }
.vruler li { display: flex; align-items: flex-end; justify-content: center; height: 124px; background: linear-gradient(#555, #555) 50% 25% / 2px 1px no-repeat, linear-gradient(#555, #555) 50% 50% / 5px 1px no-repeat, linear-gradient(#555, #555) 50% 75% / 2px 1px no-repeat; }
.vruler .top { height: 143px; background-color: #c6c6c6; }
.vruler b { display: flex; align-items: center; height: 0; font-size: 9px; font-weight: 400; writing-mode: vertical-rl; justify-content: center; transform: rotate(180deg); }
.paper { flex: 1; min-width: 0; padding: 189px 181px 0 131px; background: #fff; overflow: hidden; }
.wordart { margin: 0; text-align: center; white-space: nowrap; font: italic 700 276px/346px "Open Sans", sans-serif; color: #4472c4; filter: url(#wordart); }
.w-vscroll { flex: none; display: flex; flex-direction: column; width: 16px; padding: 0 1px; background: #dbdbdb; }
.vthumb { height: 240px; margin-bottom: auto; background: #fff; border: 1px solid #ababab; border-top: 0; }
.w-hscroll { display: flex; align-items: center; height: 16px; padding: 0 18px 0 2px; background: linear-gradient(#dbdbdb, #dbdbdb) content-box; }
.hthumb { flex: 1; height: 14px; margin: 0 165px 0 205px; background: #fff; border: 1px solid #ababab; }
.status { display: flex; align-items: center; height: 20px; padding: 0 8px 0 7px; background: #f1f1f1; border-top: 1px solid #c6c6c6; font-size: 10px; }
.status > span { margin-right: 19px; }
.views { display: flex; margin-left: auto; height: 100%; }
.views button { display: flex; align-items: center; justify-content: center; width: 35px; }
.views .on { background: #c9c9c9; }
.zoom { display: flex; align-items: center; gap: 3px; margin: 0 12px 0 4px; font-size: 14px; line-height: 16px; }
.zoom input { appearance: none; width: 92px; height: 12px; margin: 0; background: linear-gradient(#999, #999) 50% 50% / 100% 1px no-repeat, linear-gradient(#999, #999) 50% 50% / 1px 6px no-repeat; }
.zoom input::-webkit-slider-thumb { appearance: none; width: 4px; height: 12px; background: #555; }
.status .pct { margin: 0; }
```
